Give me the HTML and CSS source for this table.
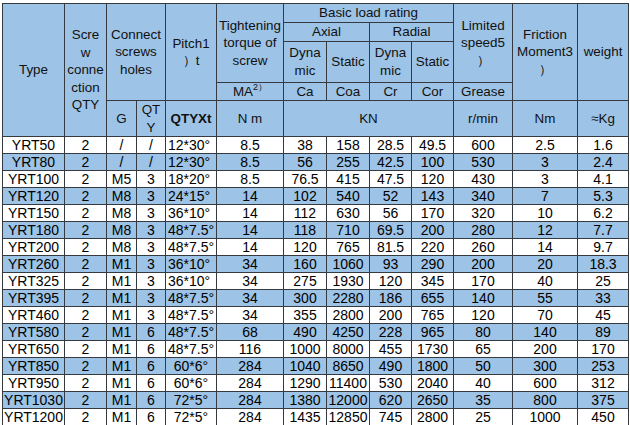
FILE: index.html
```html
<!DOCTYPE html>
<html>
<head>
<meta charset="utf-8">
<link rel="stylesheet" href="styles.css">
</head>
<body>
<table class="spec">
<colgroup>
<col class="c-type"><col class="c-qty"><col class="c-g"><col class="c-q"><col class="c-pitch"><col class="c-torque"><col class="c-ca"><col class="c-coa"><col class="c-cr"><col class="c-cor"><col class="c-speed"><col class="c-fric"><col class="c-wt">
</colgroup>
<thead>
<tr class="h-a">
<th rowspan="5">Type</th>
<th rowspan="5">Scre<br>w<br>conne<br>ction<br>QTY</th>
<th rowspan="4" colspan="2">Connect<br>screws<br>holes</th>
<th rowspan="4">Pitch1<br>）t</th>
<th rowspan="3">Tightening<br>torque of<br>screw</th>
<th colspan="4">Basic load rating</th>
<th rowspan="3">Limited<br>speed5<br>）</th>
<th rowspan="4">Friction<br>Moment3<br>）</th>
<th rowspan="4">weight</th>
</tr>
<tr class="h-b">
<th colspan="2">Axial</th>
<th colspan="2">Radial</th>
</tr>
<tr class="h-c">
<th>Dyna<br>mic</th>
<th>Static</th>
<th>Dyna<br>mic</th>
<th>Static</th>
</tr>
<tr class="h-d">
<th>MA<sup>2）</sup></th>
<th>Ca</th>
<th>Coa</th>
<th>Cr</th>
<th>Cor</th>
<th>Grease</th>
</tr>
<tr class="h-e">
<th>G</th>
<th>QT<br>Y</th>
<th class="bold">QTYXt</th>
<th>N m</th>
<th colspan="4">KN</th>
<th>r/min</th>
<th>Nm</th>
<th>≈Kg</th>
</tr>
</thead>
<tbody>
<tr><td>YRT50</td><td>2</td><td>/</td><td>/</td><td class="l">12*30°</td><td>8.5</td><td>38</td><td>158</td><td>28.5</td><td>49.5</td><td>600</td><td>2.5</td><td>1.6</td></tr>
<tr class="alt"><td>YRT80</td><td>2</td><td>/</td><td>/</td><td class="l">12*30°</td><td>8.5</td><td>56</td><td>255</td><td>42.5</td><td>100</td><td>530</td><td>3</td><td>2.4</td></tr>
<tr><td>YRT100</td><td>2</td><td>M5</td><td>3</td><td class="l">18*20°</td><td>8.5</td><td>76.5</td><td>415</td><td>47.5</td><td>120</td><td>430</td><td>3</td><td>4.1</td></tr>
<tr class="alt"><td>YRT120</td><td>2</td><td>M8</td><td>3</td><td class="l">24*15°</td><td>14</td><td>102</td><td>540</td><td>52</td><td>143</td><td>340</td><td>7</td><td>5.3</td></tr>
<tr><td>YRT150</td><td>2</td><td>M8</td><td>3</td><td class="l">36*10°</td><td>14</td><td>112</td><td>630</td><td>56</td><td>170</td><td>320</td><td>10</td><td>6.2</td></tr>
<tr class="alt"><td>YRT180</td><td>2</td><td>M8</td><td>3</td><td class="l">48*7.5°</td><td>14</td><td>118</td><td>710</td><td>69.5</td><td>200</td><td>280</td><td>12</td><td>7.7</td></tr>
<tr><td>YRT200</td><td>2</td><td>M8</td><td>3</td><td class="l">48*7.5°</td><td>14</td><td>120</td><td>765</td><td>81.5</td><td>220</td><td>260</td><td>14</td><td>9.7</td></tr>
<tr class="alt"><td>YRT260</td><td>2</td><td>M1</td><td>3</td><td class="l">36*10°</td><td>34</td><td>160</td><td>1060</td><td>93</td><td>290</td><td>200</td><td>20</td><td>18.3</td></tr>
<tr><td>YRT325</td><td>2</td><td>M1</td><td>3</td><td class="l">36*10°</td><td>34</td><td>275</td><td>1930</td><td>120</td><td>345</td><td>170</td><td>40</td><td>25</td></tr>
<tr class="alt"><td>YRT395</td><td>2</td><td>M1</td><td>3</td><td class="l">48*7.5°</td><td>34</td><td>300</td><td>2280</td><td>186</td><td>655</td><td>140</td><td>55</td><td>33</td></tr>
<tr><td>YRT460</td><td>2</td><td>M1</td><td>3</td><td class="l">48*7.5°</td><td>34</td><td>355</td><td>2800</td><td>200</td><td>765</td><td>120</td><td>70</td><td>45</td></tr>
<tr class="alt"><td>YRT580</td><td>2</td><td>M1</td><td>6</td><td class="l">48*7.5°</td><td>68</td><td>490</td><td>4250</td><td>228</td><td>965</td><td>80</td><td>140</td><td>89</td></tr>
<tr><td>YRT650</td><td>2</td><td>M1</td><td>6</td><td class="l">48*7.5°</td><td>116</td><td>1000</td><td>8000</td><td>455</td><td>1730</td><td>65</td><td>200</td><td>170</td></tr>
<tr class="alt"><td>YRT850</td><td>2</td><td>M1</td><td>6</td><td>60*6°</td><td>284</td><td>1040</td><td>8650</td><td>490</td><td>1800</td><td>50</td><td>300</td><td>253</td></tr>
<tr><td>YRT950</td><td>2</td><td>M1</td><td>6</td><td>60*6°</td><td>284</td><td>1290</td><td>11400</td><td>530</td><td>2040</td><td>40</td><td>600</td><td>312</td></tr>
<tr class="alt"><td>YRT1030</td><td>2</td><td>M1</td><td>6</td><td>72*5°</td><td>284</td><td>1380</td><td>12000</td><td>620</td><td>2650</td><td>35</td><td>800</td><td>375</td></tr>
<tr><td>YRT1200</td><td>2</td><td>M1</td><td>6</td><td>72*5°</td><td>284</td><td>1435</td><td>12850</td><td>745</td><td>2800</td><td>25</td><td>1000</td><td>450</td></tr>
</tbody>
</table>
</body>
</html>
```

FILE: styles.css
```css
html, body {
  margin: 0;
  padding: 0;
  background: #ffffff;
}
body {
  padding: 3px 0 0 2px;
  font-family: "Liberation Sans", Arial, sans-serif;
  color: #000000;
}
.spec {
  border-collapse: collapse;
  table-layout: fixed;
  width: 627px;
}
.spec th, .spec td {
  border: 1px solid #353a40;
  padding: 0;
  text-align: center;
  vertical-align: middle;
  overflow: hidden;
  white-space: nowrap;
}
.spec th {
  background: #9dc3e6;
  font-weight: normal;
  font-size: 13.4px;
  line-height: 17.5px;
  color: #111111;
}
.spec td {
  font-size: 14px;
  line-height: 16px;
  height: 16px;
  background: #ffffff;
}
.spec tr.alt td {
  background: #9dc3e6;
}
.spec td.l {
  text-align: left;
  padding-left: 2px;
}
.spec th.bold {
  font-weight: bold;
}
.spec sup {
  font-size: 9px;
  line-height: 0;
  vertical-align: 6px;
}
.h-a th { height: 18px; }
.h-b th { height: 17px; }
.h-c th { height: 40px; }
.h-d th { height: 17px; }
.h-e th { height: 34px; }
.c-type { width: 62px; }
.c-qty { width: 42px; }
.c-g { width: 30px; }
.c-q { width: 29px; }
.c-pitch { width: 51px; }
.c-torque { width: 67px; }
.c-ca { width: 43px; }
.c-coa { width: 43px; }
.c-cr { width: 42px; }
.c-cor { width: 42px; }
.c-speed { width: 59px; }
.c-fric { width: 65px; }
.c-wt { width: 51px; }
```
